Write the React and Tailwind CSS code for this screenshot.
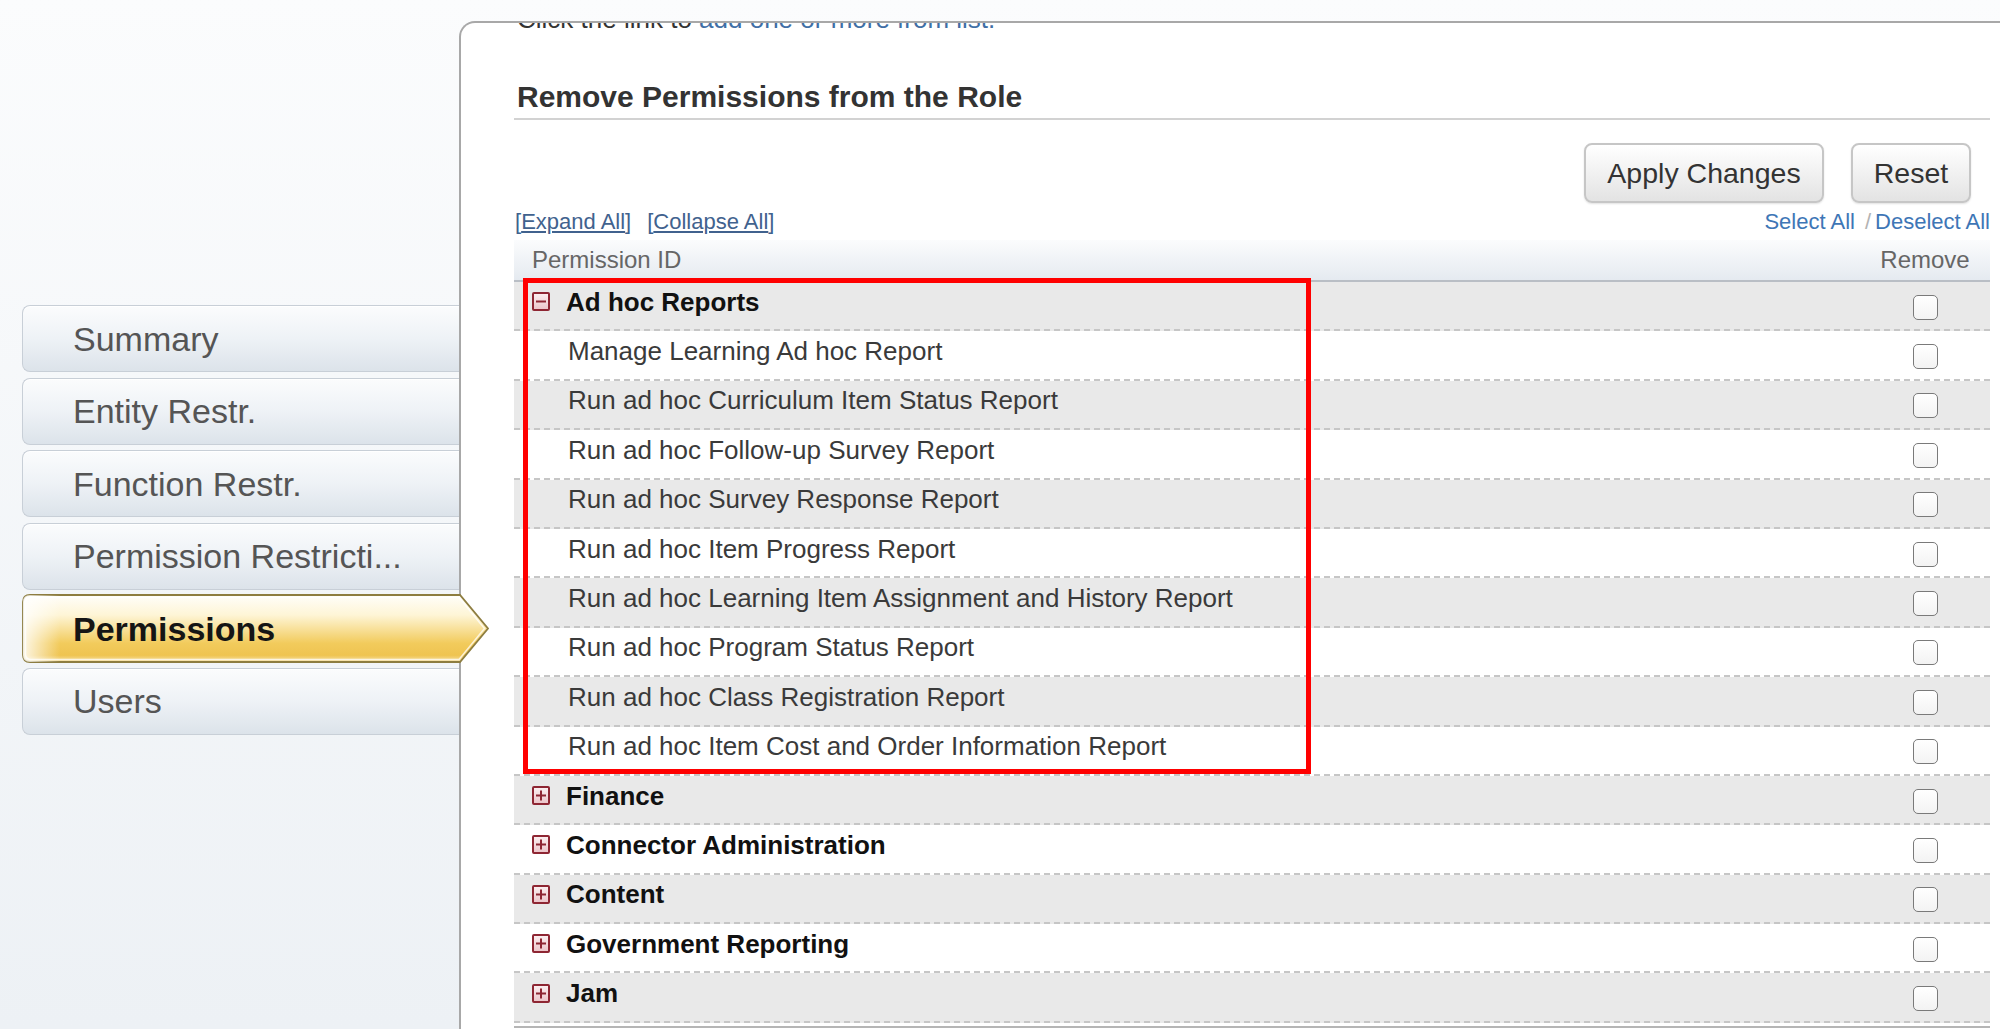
import React from 'react';

const FONT = "font-['Liberation_Sans',Arial,Helvetica,sans-serif]";

function Toggle({ open }) {
  return (
    <svg width="18" height="19" viewBox="0 0 18 19" className="shrink-0">
      <defs>
        <linearGradient id="tglfill" x1="0" y1="0" x2="0" y2="1">
          <stop offset="0" stopColor="#fcf1f2" />
          <stop offset="1" stopColor="#ebc3c8" />
        </linearGradient>
      </defs>
      <rect x="1" y="1" width="16" height="17" rx="1" fill="url(#tglfill)" stroke="#8e2633" strokeWidth="2" />
      <rect x="4" y="8.5" width="10" height="2" fill="#8e2633" />
      {!open && <rect x="8" y="4.5" width="2" height="10" fill="#8e2633" />}
    </svg>
  );
}

function NavItem({ label, active }) {
  if (active) {
    return (
      <div className="relative h-[67px] flex items-center pl-[51px]">
        <svg
          className="absolute left-0 top-[-1px] overflow-visible"
          width="468"
          height="69"
          viewBox="0 0 468 69"
        >
          <defs>
            <linearGradient id="actv" x1="0" y1="0" x2="0" y2="1">
              <stop offset="0" stopColor="#fffefa" />
              <stop offset="0.3" stopColor="#fef5d6" />
              <stop offset="0.72" stopColor="#f2cb5c" />
              <stop offset="0.9" stopColor="#efc451" />
              <stop offset="1" stopColor="#f8e4ad" />
            </linearGradient>
            <linearGradient id="acth" x1="0" y1="0" x2="1" y2="0">
              <stop offset="0" stopColor="#ffffff" stopOpacity="0.85" />
              <stop offset="0.08" stopColor="#ffffff" stopOpacity="0" />
              <stop offset="1" stopColor="#ffffff" stopOpacity="0" />
            </linearGradient>
          </defs>
          <path
            d="M8 1 H438 L466 34.5 L438 68 H8 Q1 68 1 61 V8 Q1 1 8 1 Z"
            fill="url(#actv)"
            stroke="#8d7d40"
            strokeWidth="1.8"
          />
          <path
            d="M8 1 H438 L466 34.5 L438 68 H8 Q1 68 1 61 V8 Q1 1 8 1 Z"
            fill="url(#acth)"
          />
          <path
            d="M9 3.5 H437 L462.5 34.5 L437 65.5 H9 Q3.5 65.5 3.5 60 V9 Q3.5 3.5 9 3.5 Z"
            fill="none"
            stroke="#ffffff"
            strokeOpacity="0.75"
            strokeWidth="1.5"
          />
        </svg>
        <span className="relative text-[34px] leading-none font-bold text-[#151515]">{label}</span>
      </div>
    );
  }
  return (
    <div className="h-[67px] flex items-center pl-[50px] rounded-l-[8px] border border-r-0 border-[#c8cfd7] bg-gradient-to-b from-[#fbfcfd] via-[#eef2f6] to-[#dce3ea] shadow-[inset_0_1px_0_#ffffff]">
      <span className="text-[34px] leading-none text-[#555555]">{label}</span>
    </div>
  );
}

const rows = [
  { t: 'Ad hoc Reports', g: true, open: true },
  { t: 'Manage Learning Ad hoc Report' },
  { t: 'Run ad hoc Curriculum Item Status Report' },
  { t: 'Run ad hoc Follow-up Survey Report' },
  { t: 'Run ad hoc Survey Response Report' },
  { t: 'Run ad hoc Item Progress Report' },
  { t: 'Run ad hoc Learning Item Assignment and History Report' },
  { t: 'Run ad hoc Program Status Report' },
  { t: 'Run ad hoc Class Registration Report' },
  { t: 'Run ad hoc Item Cost and Order Information Report' },
  { t: 'Finance', g: true },
  { t: 'Connector Administration', g: true },
  { t: 'Content', g: true },
  { t: 'Government Reporting', g: true },
  { t: 'Jam', g: true },
];

function Row({ row, idx }) {
  const bg = idx % 2 === 0 ? 'bg-[#e9e9e9]' : 'bg-white';
  return (
    <div className={`${bg} h-[49.4px] flex items-center border-b-2 border-dashed border-[#c6c6c6]`}>
      <div className="flex-1 flex items-center pb-[8px]">
        {row.g ? (
          <div className="flex items-center pl-[18px] gap-[16px]">
            <Toggle open={row.open} />
            <span className="text-[26px] leading-[30px] font-bold text-[#111111]">{row.t}</span>
          </div>
        ) : (
          <span className="pl-[54px] text-[26px] leading-[30px] text-[#3a3a3a]">{row.t}</span>
        )}
      </div>
      <div className="w-[130px] flex justify-center items-center pt-[3px]">
        <div className="w-[25px] h-[25px] rounded-[5px] border-[1.5px] border-[#7a7a7a] bg-gradient-to-b from-white to-[#f3f3f3]" />
      </div>
    </div>
  );
}

export default function App() {
  const nav = ['Summary', 'Entity Restr.', 'Function Restr.', 'Permission Restricti...', 'Permissions', 'Users'];
  return (
    <div className={`${FONT} w-[2000px] h-[1029px] overflow-hidden flex bg-gradient-to-b from-[#fbfcfd] to-[#edf1f5]`}>
      <div className="relative z-10 w-[459px] shrink-0 pl-[22px] pt-[305px] flex flex-col gap-[5.5px]">
        {nav.map((n) => (
          <NavItem key={n} label={n} active={n === 'Permissions'} />
        ))}
      </div>

      <div className="relative flex-1 mt-[21px] bg-white border-l-2 border-t-2 border-[#a8a8a8] rounded-tl-[16px] overflow-hidden">
        <div className="pl-[53px] pr-[10px]">
          <div className="-mt-[19px] h-[30px] leading-[30px] text-[26px] pl-[3px] text-[#333333] whitespace-nowrap">
            Click the link to <span className="text-[#3f6fa6]">add one or more from list.</span>
          </div>
          <h2 className="mt-[45px] h-[36px] leading-[36px] text-[30px] font-bold text-[#333333] pl-[3px]">
            Remove Permissions from the Role
          </h2>
          <div className="mt-[3px] h-[2px] bg-[#d2d2d2]" />

          <div className="mt-[23px] flex justify-end gap-[27px] pr-[19px]">
            <button className="h-[60px] w-[240px] rounded-[8px] border-2 border-[#c6c6c6] bg-gradient-to-b from-white to-[#e3e3e3] text-[28.5px] text-[#333333] shadow-[0_1px_2px_rgba(0,0,0,0.12)]">
              Apply Changes
            </button>
            <button className="h-[60px] w-[120px] rounded-[8px] border-2 border-[#c6c6c6] bg-gradient-to-b from-white to-[#e3e3e3] text-[28.5px] text-[#333333] shadow-[0_1px_2px_rgba(0,0,0,0.12)]">
              Reset
            </button>
          </div>

          <div className="mt-[6px] flex justify-between items-center h-[26px] leading-[26px] text-[22px]">
            <div className="pl-[1px] text-[#41628e] flex">
              <span>
                [<span className="underline">Expand All</span>]
              </span>
              <span className="ml-[16px]">
                [<span className="underline">Collapse All</span>]
              </span>
            </div>
            <div className="text-[#3e76b6] flex">
              <span>Select All</span>
              <span className="ml-[10px] text-[#b3b3b3]">/</span>
              <span className="ml-[4px]">Deselect All</span>
            </div>
          </div>

          <div className="mt-[5px] h-[42px] flex items-center border-b-2 border-[#b9bec5] bg-gradient-to-b from-[#fbfcfd] to-[#e5eaf0] text-[24px] text-[#666666]">
            <div className="flex-1 pl-[18px]">Permission ID</div>
            <div className="w-[130px] text-center">Remove</div>
          </div>

          {rows.map((r, i) => (
            <Row key={r.t} row={r} idx={i} />
          ))}
          <div className="mt-[3px] h-[2px] bg-[#b5b5b5]" />
        </div>

        <div className="absolute left-[62px] top-[255px] w-[788px] h-[496px] border-[5px] border-[#ff0000] pointer-events-none" />
      </div>
    </div>
  );
}
